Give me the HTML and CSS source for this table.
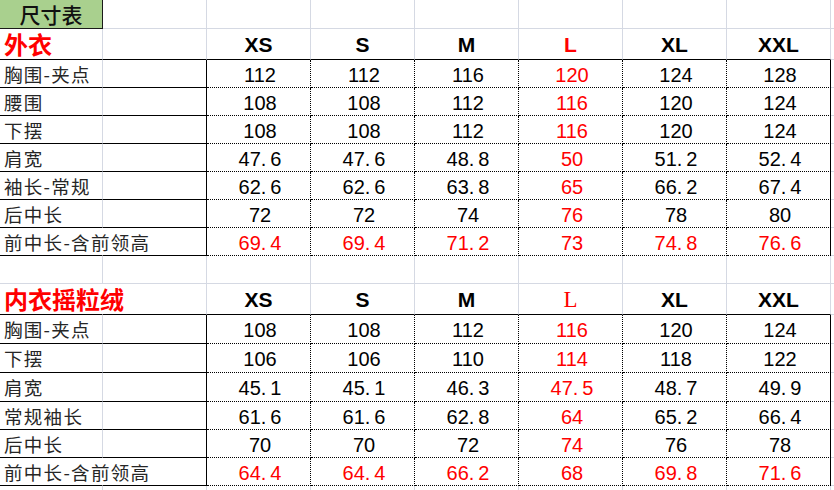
FILE: index.html
```html
<!DOCTYPE html>
<html lang="zh-CN">
<head>
<meta charset="utf-8">
<title>尺寸表</title>
<link rel="stylesheet" href="styles.css">
</head>
<body>
<div class="sheet">
  <div class="row r-top">
    <div class="c title">尺寸表</div><div class="c"></div><div class="c"></div><div class="c"></div><div class="c"></div><div class="c"></div><div class="c"></div><div class="c"></div><div class="c fill"></div>
  </div>

  <div class="row r-head">
    <div class="c h sec">外衣</div><div class="c h"></div>
    <div class="c h sz">XS</div><div class="c h sz">S</div><div class="c h sz">M</div><div class="c h sz red">L</div><div class="c h sz">XL</div><div class="c h sz">XXL</div><div class="c fill"></div>
  </div>
  <div class="row r-data">
    <div class="c la">胸围-夹点</div><div class="c lb"></div>
    <div class="c d">112</div><div class="c d">112</div><div class="c d">116</div><div class="c d red">120</div><div class="c d">124</div><div class="c d last">128</div><div class="c fill"></div>
  </div>
  <div class="row r-data">
    <div class="c la">腰围</div><div class="c lb"></div>
    <div class="c d">108</div><div class="c d">108</div><div class="c d">112</div><div class="c d red">116</div><div class="c d">120</div><div class="c d last">124</div><div class="c fill"></div>
  </div>
  <div class="row r-data">
    <div class="c la">下摆</div><div class="c lb"></div>
    <div class="c d">108</div><div class="c d">108</div><div class="c d">112</div><div class="c d red">116</div><div class="c d">120</div><div class="c d last">124</div><div class="c fill"></div>
  </div>
  <div class="row r-data">
    <div class="c la">肩宽</div><div class="c lb"></div>
    <div class="c d">47<span class="pt">.</span>6</div><div class="c d">47<span class="pt">.</span>6</div><div class="c d">48<span class="pt">.</span>8</div><div class="c d red">50</div><div class="c d">51<span class="pt">.</span>2</div><div class="c d last">52<span class="pt">.</span>4</div><div class="c fill"></div>
  </div>
  <div class="row r-data">
    <div class="c la">袖长-常规</div><div class="c lb"></div>
    <div class="c d">62<span class="pt">.</span>6</div><div class="c d">62<span class="pt">.</span>6</div><div class="c d">63<span class="pt">.</span>8</div><div class="c d red">65</div><div class="c d">66<span class="pt">.</span>2</div><div class="c d last">67<span class="pt">.</span>4</div><div class="c fill"></div>
  </div>
  <div class="row r-data">
    <div class="c la">后中长</div><div class="c lb"></div>
    <div class="c d">72</div><div class="c d">72</div><div class="c d">74</div><div class="c d red">76</div><div class="c d">78</div><div class="c d last">80</div><div class="c fill"></div>
  </div>
  <div class="row r-data">
    <div class="c la long">前中长-含前领高</div><div class="c lb"></div>
    <div class="c d red">69<span class="pt">.</span>4</div><div class="c d red">69<span class="pt">.</span>4</div><div class="c d red">71<span class="pt">.</span>2</div><div class="c d red">73</div><div class="c d red">74<span class="pt">.</span>8</div><div class="c d last red">76<span class="pt">.</span>6</div><div class="c fill"></div>
  </div>

  <div class="row r-empty">
    <div class="c"></div><div class="c"></div><div class="c"></div><div class="c"></div><div class="c"></div><div class="c"></div><div class="c"></div><div class="c"></div><div class="c fill"></div>
  </div>

  <div class="row r-head">
    <div class="c h sec long">内衣摇粒绒</div><div class="c h"></div>
    <div class="c h sz">XS</div><div class="c h sz">S</div><div class="c h sz">M</div><div class="c h sz red serif">L</div><div class="c h sz">XL</div><div class="c h sz">XXL</div><div class="c fill"></div>
  </div>
  <div class="row r-data tall">
    <div class="c la">胸围-夹点</div><div class="c lb"></div>
    <div class="c d">108</div><div class="c d">108</div><div class="c d">112</div><div class="c d red">116</div><div class="c d">120</div><div class="c d last">124</div><div class="c fill"></div>
  </div>
  <div class="row r-data tall">
    <div class="c la">下摆</div><div class="c lb"></div>
    <div class="c d">106</div><div class="c d">106</div><div class="c d">110</div><div class="c d red">114</div><div class="c d">118</div><div class="c d last">122</div><div class="c fill"></div>
  </div>
  <div class="row r-data tall">
    <div class="c la">肩宽</div><div class="c lb"></div>
    <div class="c d">45<span class="pt">.</span>1</div><div class="c d">45<span class="pt">.</span>1</div><div class="c d">46<span class="pt">.</span>3</div><div class="c d red">47<span class="pt">.</span>5</div><div class="c d">48<span class="pt">.</span>7</div><div class="c d last">49<span class="pt">.</span>9</div><div class="c fill"></div>
  </div>
  <div class="row r-data">
    <div class="c la">常规袖长</div><div class="c lb"></div>
    <div class="c d">61<span class="pt">.</span>6</div><div class="c d">61<span class="pt">.</span>6</div><div class="c d">62<span class="pt">.</span>8</div><div class="c d red">64</div><div class="c d">65<span class="pt">.</span>2</div><div class="c d last">66<span class="pt">.</span>4</div><div class="c fill"></div>
  </div>
  <div class="row r-data">
    <div class="c la">后中长</div><div class="c lb"></div>
    <div class="c d">70</div><div class="c d">70</div><div class="c d">72</div><div class="c d red">74</div><div class="c d">76</div><div class="c d last">78</div><div class="c fill"></div>
  </div>
  <div class="row r-data">
    <div class="c la long">前中长-含前领高</div><div class="c lb"></div>
    <div class="c d red">64<span class="pt">.</span>4</div><div class="c d red">64<span class="pt">.</span>4</div><div class="c d red">66<span class="pt">.</span>2</div><div class="c d red">68</div><div class="c d red">69<span class="pt">.</span>8</div><div class="c d last red">71<span class="pt">.</span>6</div><div class="c fill"></div>
  </div>

  <div class="row r-empty">
    <div class="c"></div><div class="c"></div><div class="c"></div><div class="c"></div><div class="c"></div><div class="c"></div><div class="c"></div><div class="c"></div><div class="c fill"></div>
  </div>
</div>
</body>
</html>
```

FILE: styles.css
```css
html, body {
  margin: 0;
  padding: 0;
  background: #ffffff;
  overflow: hidden;
}

.sheet {
  width: 834px;
  height: 490px;
  overflow: hidden;
  display: flex;
  flex-direction: column;
  font-family: "Liberation Sans", Arial, sans-serif;
  color: #000;
}

.row {
  display: grid;
  grid-template-columns: 103px 104px repeat(6, 104px) 1fr;
  flex: none;
}

.r-top { height: 29px; }
.r-head { height: 31px; }
.r-data { height: 28px; }
.r-data.tall { height: 29px; }
.r-empty { height: 28px; }

.c {
  box-sizing: border-box;
  border-right: 1px solid #d5d9e3;
  border-bottom: 1px solid #d5d9e3;
  display: flex;
  align-items: center;
  justify-content: center;
  white-space: nowrap;
  min-width: 0;
  line-height: 1.1;
}

.fill {
  border-right: none;
}

.title {
  background: #a9d08e;
  border-right: 1px solid #1a1a1a;
  border-bottom: 1px solid #1a1a1a;
  font-family: "Noto Sans CJK SC", sans-serif;
  font-size: 21px;
  font-weight: 500;
  color: #111;
  line-height: 1;
}

.h {
  border-bottom: 1px solid #000;
  padding-top: 2px;
}

.sec {
  justify-content: flex-start;
  padding-left: 4px;
  font-family: "Noto Sans CJK SC", sans-serif;
  font-size: 24px;
  font-weight: 700;
  color: #ff0000;
  overflow: visible;
  line-height: 1;
  padding-top: 0;
}

.long {
  border-right-color: transparent;
  overflow: visible;
}

.sz {
  font-family: "Liberation Sans", Arial, sans-serif;
  font-size: 21px;
  font-weight: 700;
}

.serif {
  font-family: "Liberation Serif", "Times New Roman", serif;
  font-weight: 400;
  font-size: 23px;
}

.la {
  justify-content: flex-start;
  padding-left: 4px;
  padding-top: 1px;
  border-bottom: 1px solid #000;
  font-family: "Noto Sans CJK SC", sans-serif;
  font-size: 18.5px;
  font-weight: 400;
  letter-spacing: 1.3px;
  color: #262626;
  overflow: visible;
  line-height: 1;
}

.lb {
  border-bottom: 1px solid #000;
  border-right: 1px solid #000;
}

.d {
  border-right: 1px dotted #000;
  border-bottom: 1px dotted #000;
  font-size: 20px;
  padding-top: 2px;
  padding-left: 3px;
}

.d.last {
  border-right: 1px solid #000;
}

.red {
  color: #ff0000;
}

.pt {
  letter-spacing: 4px;
}
```
